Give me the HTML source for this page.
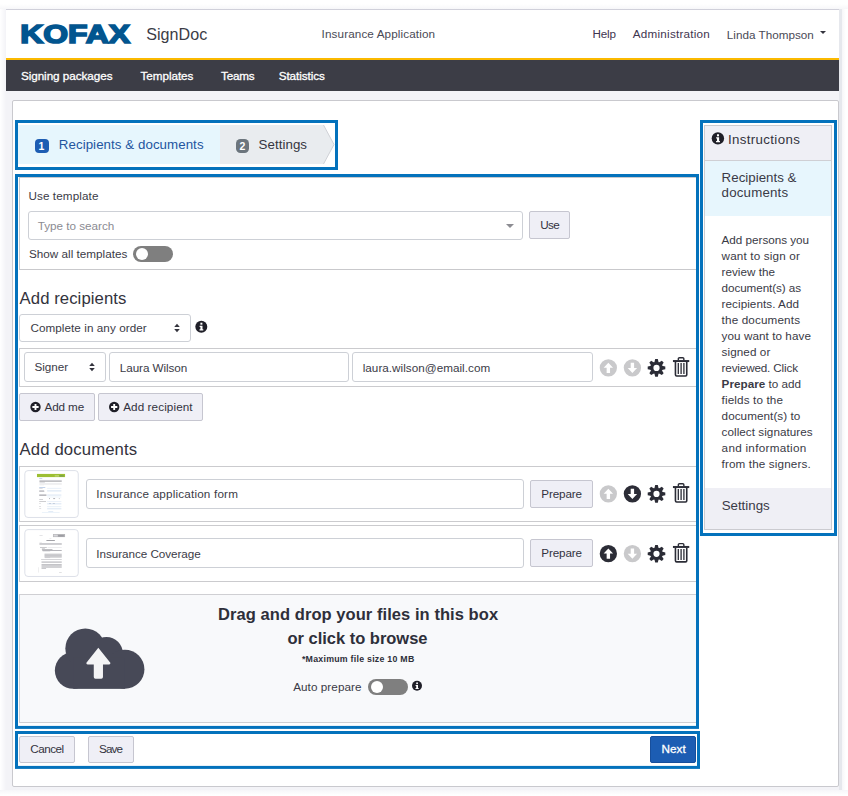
<!DOCTYPE html>
<html lang="en">
<head>
<meta charset="utf-8">
<title>SignDoc - Insurance Application</title>
<style>
*{box-sizing:border-box;margin:0;padding:0}
html,body{width:848px;height:796px;overflow:hidden;background:#fff}
body{position:relative;font-family:"Liberation Sans",sans-serif;font-size:11.7px;color:#3a3a46}
.abs{position:absolute}
.t{position:absolute;white-space:nowrap;line-height:1}
.blue{position:absolute;border:3.3px solid #0b72ba}
.btn{position:absolute;background:#efeff6;border:1px solid #c6c6d0;border-radius:2px}
.inp{position:absolute;background:#fff;border:1px solid #cdd0d6;border-radius:3px}
.box{position:absolute;border:1px solid #cbcbce;background:#fff}
b{font-weight:bold}
</style>
</head>
<body>
<div class="abs" style="left:0;top:5px;width:848px;height:791px;background:linear-gradient(to right,#fff 0,#fdfdfe 1px,#f3f3f7 6px,#f3f3f7 839px,#e6e8ed 839px,#e6e8ed 842px,#f6f6f8 842px,#fff 846px)"></div>
<div class="abs" style="left:0;top:0;width:848px;height:9px;background:linear-gradient(to bottom,#fff 0,#fff 4px,#f7f7f9 9px)"></div>
<div class="abs" style="left:0;top:790px;width:848px;height:6px;background:linear-gradient(to bottom,#f6f6f9 0,#fff 5px)"></div>
<div class="abs" style="left:6px;top:9px;width:833px;height:1px;background:#d0d0da"></div>
<div class="abs" style="left:6px;top:10px;width:833px;height:48px;background:#fff"></div>
<div class="abs" style="left:6px;top:58px;width:833px;height:2px;background:#fbb900"></div>
<div class="abs" style="left:6px;top:60px;width:833px;height:30.5px;background:#3c3d46"></div>
<div class="abs" style="left:12px;top:100px;width:827px;height:687px;background:#fff;border:1px solid #c9c9ce;border-radius:2px"></div>
<svg class="abs" style="left:19px;top:20px" width="116" height="28" viewBox="0 0 116 28"><text x="1.2" y="23.1" font-family="Liberation Sans, sans-serif" font-weight="bold" font-size="26.2" fill="#02558f" stroke="#02558f" stroke-width="1.7" stroke-linejoin="miter" textLength="109.8" lengthAdjust="spacingAndGlyphs">KOFAX</text></svg>
<span class="t" id="t1" style="left:146.2px;top:25.67px;font-size:16.1px;color:#3c3c46;letter-spacing:0.026px;">SignDoc</span>
<span class="t" id="t2" style="left:321.6px;top:28.40px;font-size:11.7px;color:#4a4a56;letter-spacing:0.115px;">Insurance Application</span>
<span class="t" id="t3" style="left:592.4px;top:27.70px;font-size:11.7px;color:#3f3550;letter-spacing:-0.149px;">Help</span>
<span class="t" id="t4" style="left:632.8px;top:27.70px;font-size:11.7px;color:#3f3550;letter-spacing:0.226px;">Administration</span>
<span class="t" id="t5" style="left:726.8px;top:29.00px;font-size:11.7px;color:#4a4a56;letter-spacing:0.011px;">Linda Thompson</span>
<div class="abs" style="left:820.2px;top:31px;width:0;height:0;border-left:3px solid transparent;border-right:3px solid transparent;border-top:3.5px solid #33333d"></div>
<span class="t" id="t6" style="left:20.9px;top:70.00px;font-size:11.7px;color:#ffffff;letter-spacing:-0.045px;-webkit-text-stroke:0.3px #fff;">Signing packages</span>
<span class="t" id="t7" style="left:140.5px;top:70.00px;font-size:11.7px;color:#ffffff;letter-spacing:-0.048px;-webkit-text-stroke:0.3px #fff;">Templates</span>
<span class="t" id="t8" style="left:221.1px;top:70.00px;font-size:11.7px;color:#ffffff;letter-spacing:-0.209px;-webkit-text-stroke:0.3px #fff;">Teams</span>
<span class="t" id="t9" style="left:278.7px;top:70.00px;font-size:11.7px;color:#ffffff;letter-spacing:-0.063px;-webkit-text-stroke:0.3px #fff;">Statistics</span>
<div class="abs" style="left:18px;top:125px;width:202px;height:39px;background:#e6f6fd"></div>
<svg class="abs" style="left:220px;top:125px" width="116" height="39" viewBox="0 0 116 39"><path d="M0 0H103.5L114 19.5L103.5 39H0Z" fill="#e9ecef"/><path d="M103.5 0L114 19.5L103.5 39" fill="none" stroke="#cfd1d6" stroke-width="1"/></svg>
<div class="abs" style="left:35px;top:139px;width:14px;height:14px;border-radius:4px;background:#1d5db3"></div>
<span class="t" id="t10" style="left:38.6px;top:141.31px;font-size:10.5px;color:#fff;font-weight:bold;">1</span>
<span class="t" id="t11" style="left:58.8px;top:138.04px;font-size:13.3px;color:#23559f;letter-spacing:0.064px;">Recipients &amp; documents</span>
<div class="abs" style="left:235.9px;top:139px;width:13.2px;height:14px;border-radius:4.500px;background:#6c757d"></div>
<span class="t" id="t12" style="left:239.6px;top:141.31px;font-size:10.5px;color:#fff;font-weight:bold;">2</span>
<span class="t" id="t13" style="left:258.5px;top:138.04px;font-size:13.3px;color:#35353f;letter-spacing:0.065px;">Settings</span>
<div class="box" style="left:19px;top:177px;width:677.5px;height:92.5px;border-color:#c9c9cc"></div>
<span class="t" id="t14" style="left:28.4px;top:190.30px;font-size:11.7px;color:#3b3b47;letter-spacing:0.104px;">Use template</span>
<div class="inp" style="left:28px;top:211px;width:495px;height:29px"></div>
<span class="t" id="t15" style="left:37.8px;top:220.10px;font-size:11.7px;color:#8b8b93;letter-spacing:-0.013px;">Type to search</span>
<div class="abs" style="left:506px;top:224px;width:0;height:0;border-left:4px solid transparent;border-right:4px solid transparent;border-top:4px solid #8c8c92"></div>
<div class="btn" style="left:529px;top:211px;width:41px;height:28px"></div>
<span class="t" id="t16" style="left:540.3px;top:219.40px;font-size:11.7px;color:#33333f;letter-spacing:-0.648px;">Use</span>
<span class="t" id="t17" style="left:28.9px;top:248.30px;font-size:11.7px;color:#3b3b47;letter-spacing:0.023px;">Show all templates</span>
<div class="abs" style="left:133px;top:246px;width:40px;height:16px;border-radius:8px;background:#7f7f7f"></div>
<div class="abs" style="left:135.5px;top:248px;width:12px;height:12px;border-radius:6px;background:#fff"></div>
<span class="t" id="t18" style="left:19.6px;top:291.06px;font-size:16.7px;color:#33333d;letter-spacing:0.073px;">Add recipients</span>
<div class="inp" style="left:19px;top:314px;width:172px;height:27.5px"></div>
<span class="t" id="t19" style="left:30.4px;top:321.60px;font-size:11.7px;color:#3b3b47;letter-spacing:0.065px;">Complete in any order</span>
<svg class="abs" style="left:174px;top:323px" width="7" height="11" viewBox="0 0 7 11"><g transform="translate(0.00 0.00)"><path d="M0.200 4L3 0.800L5.800 4Z M0.200 6L3 9.200L5.800 6Z" fill="#33333d"/></g></svg>
<svg class="abs" style="left:195px;top:320px" width="14" height="14" viewBox="0 0 14 14"><g transform="translate(0.30 0.70)"><circle cx="6" cy="6" r="6" fill="#1f1f28"/><rect x="5.100" y="2" width="2" height="2" fill="#fff"/><path d="M4.300 5h2.900v3.600h0.800v1.200H4.200V8.600h0.900V6.200H4.300Z" fill="#fff"/></g></svg>
<div class="box" style="left:19px;top:348px;width:677.5px;height:39px"></div>
<div class="inp" style="left:24px;top:352px;width:81.5px;height:29.5px"></div>
<span class="t" id="t20" style="left:34.6px;top:361.30px;font-size:11.7px;color:#3b3b47;letter-spacing:-0.059px;">Signer</span>
<svg class="abs" style="left:89px;top:362px" width="7" height="11" viewBox="0 0 7 11"><g transform="translate(0.00 0.00)"><path d="M0.200 4L3 0.800L5.800 4Z M0.200 6L3 9.200L5.800 6Z" fill="#33333d"/></g></svg>
<div class="inp" style="left:109px;top:352px;width:239.5px;height:29.5px"></div>
<span class="t" id="t21" style="left:119.8px;top:361.70px;font-size:11.7px;color:#3b3b47;letter-spacing:-0.065px;">Laura Wilson</span>
<div class="inp" style="left:352px;top:352px;width:241px;height:29.5px"></div>
<span class="t" id="t22" style="left:362.7px;top:361.70px;font-size:11.7px;color:#3b3b47;letter-spacing:0.031px;">laura.wilson@email.com</span>
<svg class="abs" style="left:599px;top:358px" width="20" height="20" viewBox="0 0 20 20"><g transform="translate(0.35 0.80)"><circle cx="9" cy="9" r="8.650" fill="#c9c9cb"/><path d="M9 3.900L13.700 8.900H10.700V14.100H7.300V8.900H4.300Z" fill="#fff"/></g></svg>
<svg class="abs" style="left:623px;top:358px" width="20" height="20" viewBox="0 0 20 20"><g transform="translate(0.40 0.80)"><circle cx="9" cy="9" r="8.650" fill="#c9c9cb"/><path transform="rotate(180 9 9)" d="M9 3.900L13.700 8.900H10.700V14.100H7.300V8.900H4.300Z" fill="#fff"/></g></svg>
<svg class="abs" style="left:647px;top:358px" width="20" height="20" viewBox="0 0 20 20"><g transform="translate(0.50 0.90)"><g fill="#2b2c36"><path d="M6.800 3.800L7.700 0.200H10.300L11.200 3.800Z" transform="rotate(0 9 9)"/><path d="M6.800 3.800L7.700 0.200H10.300L11.200 3.800Z" transform="rotate(45 9 9)"/><path d="M6.800 3.800L7.700 0.200H10.300L11.200 3.800Z" transform="rotate(90 9 9)"/><path d="M6.800 3.800L7.700 0.200H10.300L11.200 3.800Z" transform="rotate(135 9 9)"/><path d="M6.800 3.800L7.700 0.200H10.300L11.200 3.800Z" transform="rotate(180 9 9)"/><path d="M6.800 3.800L7.700 0.200H10.300L11.200 3.800Z" transform="rotate(225 9 9)"/><path d="M6.800 3.800L7.700 0.200H10.300L11.200 3.800Z" transform="rotate(270 9 9)"/><path d="M6.800 3.800L7.700 0.200H10.300L11.200 3.800Z" transform="rotate(315 9 9)"/></g><circle cx="9" cy="9" r="4.650" fill="none" stroke="#2b2c36" stroke-width="3.100"/></g></svg>
<svg class="abs" style="left:672px;top:357px" width="19" height="21" viewBox="0 0 19 21"><g transform="translate(0.95 0.05)"><g fill="none" stroke="#2b2c36"><path d="M5.400 3.200V1.800Q5.400 0.700 6.500 0.700H9.800Q10.900 0.700 10.900 1.800V3.200" stroke-width="1.400"/><path d="M0 4H16.300" stroke-width="2"/><path d="M2.500 5V17.700Q2.500 18.900 3.700 18.900H12.600Q13.800 18.900 13.800 17.700V5" stroke-width="1.600"/><path d="M5.350 6V17M8.150 6V17M10.950 6V17" stroke-width="1.300"/></g></g></svg>
<div class="btn" style="left:19px;top:393px;width:76px;height:28px"></div>
<svg class="abs" style="left:30px;top:401px" width="12" height="13" viewBox="0 0 12 13"><g transform="translate(0.30 0.80) scale(1.0400)"><circle cx="5" cy="5" r="5" fill="#1f1f28"/><path d="M4.100 2h1.800v2.100H8v1.800H5.900V8H4.100V5.900H2V4.100h2.100Z" fill="#fff"/></g></svg>
<span class="t" id="t23" style="left:44.5px;top:401.10px;font-size:11.7px;color:#33333f;letter-spacing:-0.116px;">Add me</span>
<div class="btn" style="left:98px;top:393px;width:105px;height:28px"></div>
<svg class="abs" style="left:109px;top:401px" width="12" height="13" viewBox="0 0 12 13"><g transform="translate(0.00 0.80) scale(1.0400)"><circle cx="5" cy="5" r="5" fill="#1f1f28"/><path d="M4.100 2h1.800v2.100H8v1.800H5.900V8H4.100V5.900H2V4.100h2.100Z" fill="#fff"/></g></svg>
<span class="t" id="t24" style="left:123.2px;top:401.10px;font-size:11.7px;color:#33333f;letter-spacing:0.097px;">Add recipient</span>
<span class="t" id="t25" style="left:19.6px;top:441.86px;font-size:16.7px;color:#33333d;letter-spacing:0.128px;">Add documents</span>
<div class="box" style="left:19px;top:466px;width:677.5px;height:55.5px"></div>
<svg class="abs" style="left:20px;top:466px" width="64" height="56" viewBox="0 0 848 742"><rect x="64" y="61" width="708" height="621" rx="42" fill="#fff" stroke="#d9dde5" stroke-width="12"/><g opacity="0.92"><rect x="225" y="105" width="372" height="42" fill="#95ba22"/><rect x="460" y="122" width="60" height="18" fill="#b9d26a"/><rect x="520" y="122" width="60" height="18" fill="#6f9a3a"/><rect x="255" y="160" width="40" height="8" fill="#9db9df"/><rect x="258" y="185" width="295" height="7" fill="#a6a6ad"/><rect x="258" y="198" width="295" height="8" fill="#85858d"/><rect x="258" y="210" width="72" height="6" fill="#9a9aa2"/><rect x="258" y="228" width="295" height="5" fill="#d2d2d6"/><rect x="258" y="240" width="295" height="5" fill="#d6d6da"/><rect x="258" y="250" width="62" height="4" fill="#dcdcdf"/><rect x="255" y="280" width="80" height="8" fill="#93b1dc"/><rect x="360" y="290" width="188" height="12" fill="#e6eef8"/><rect x="360" y="318" width="188" height="22" fill="#e3ecf7"/><rect x="360" y="375" width="188" height="21" fill="#e6eef8"/><rect x="360" y="405" width="188" height="11" fill="#e9f0f9"/><rect x="360" y="465" width="188" height="10" fill="#e3ecf7"/><rect x="360" y="490" width="188" height="20" fill="#e3ecf7"/><rect x="360" y="533" width="188" height="12" fill="#e6eef8"/><rect x="360" y="556" width="188" height="19" fill="#e3ecf7"/><rect x="255" y="292" width="45" height="6" fill="#b4b4ba"/><rect x="255" y="325" width="65" height="7" fill="#9a9aa2"/><rect x="255" y="334" width="67" height="7" fill="#8e8e96"/><rect x="255" y="378" width="95" height="8" fill="#9a9aa2"/><rect x="255" y="388" width="95" height="8" fill="#8e8e96"/><rect x="255" y="440" width="50" height="7" fill="#a2a2a9"/><rect x="255" y="465" width="90" height="7" fill="#9a9aa2"/><rect x="255" y="492" width="20" height="6" fill="#b0b0b6"/><rect x="255" y="533" width="20" height="7" fill="#b0b0b6"/><rect x="255" y="560" width="25" height="6" fill="#b8b8be"/><rect x="385" y="428" width="12" height="10" fill="#8c8c94"/><rect x="440" y="428" width="25" height="10" fill="#8c8c94"/><rect x="515" y="428" width="10" height="10" fill="#a0a0a8"/><rect x="385" y="492" width="25" height="8" fill="#a9b4c6"/><rect x="435" y="492" width="27" height="8" fill="#a9b4c6"/><rect x="375" y="600" width="65" height="6" fill="#bcd3ee"/><rect x="290" y="612" width="235" height="6" fill="#d3e2f3"/></g></svg>
<div class="inp" style="left:86px;top:479px;width:437.5px;height:29.5px"></div>
<span class="t" id="t26" style="left:96.3px;top:488.10px;font-size:11.7px;color:#3b3b47;letter-spacing:0.181px;">Insurance application form</span>
<div class="btn" style="left:530px;top:480px;width:63px;height:27.5px"></div>
<span class="t" id="t27" style="left:541.3px;top:487.70px;font-size:11.7px;color:#33333f;letter-spacing:-0.132px;">Prepare</span>
<svg class="abs" style="left:599px;top:484px" width="20" height="20" viewBox="0 0 20 20"><g transform="translate(0.35 0.80)"><circle cx="9" cy="9" r="8.650" fill="#c9c9cb"/><path d="M9 3.900L13.700 8.900H10.700V14.100H7.300V8.900H4.300Z" fill="#fff"/></g></svg>
<svg class="abs" style="left:623px;top:484px" width="20" height="20" viewBox="0 0 20 20"><g transform="translate(0.40 0.80)"><circle cx="9" cy="9" r="8.650" fill="#2b2c36"/><path transform="rotate(180 9 9)" d="M9 3.900L13.700 8.900H10.700V14.100H7.300V8.900H4.300Z" fill="#fff"/></g></svg>
<svg class="abs" style="left:647px;top:484px" width="20" height="20" viewBox="0 0 20 20"><g transform="translate(0.50 0.90)"><g fill="#2b2c36"><path d="M6.800 3.800L7.700 0.200H10.300L11.200 3.800Z" transform="rotate(0 9 9)"/><path d="M6.800 3.800L7.700 0.200H10.300L11.200 3.800Z" transform="rotate(45 9 9)"/><path d="M6.800 3.800L7.700 0.200H10.300L11.200 3.800Z" transform="rotate(90 9 9)"/><path d="M6.800 3.800L7.700 0.200H10.300L11.200 3.800Z" transform="rotate(135 9 9)"/><path d="M6.800 3.800L7.700 0.200H10.300L11.200 3.800Z" transform="rotate(180 9 9)"/><path d="M6.800 3.800L7.700 0.200H10.300L11.200 3.800Z" transform="rotate(225 9 9)"/><path d="M6.800 3.800L7.700 0.200H10.300L11.200 3.800Z" transform="rotate(270 9 9)"/><path d="M6.800 3.800L7.700 0.200H10.300L11.200 3.800Z" transform="rotate(315 9 9)"/></g><circle cx="9" cy="9" r="4.650" fill="none" stroke="#2b2c36" stroke-width="3.100"/></g></svg>
<svg class="abs" style="left:672px;top:483px" width="19" height="21" viewBox="0 0 19 21"><g transform="translate(0.95 0.05)"><g fill="none" stroke="#2b2c36"><path d="M5.400 3.200V1.800Q5.400 0.700 6.500 0.700H9.800Q10.900 0.700 10.900 1.800V3.200" stroke-width="1.400"/><path d="M0 4H16.300" stroke-width="2"/><path d="M2.500 5V17.700Q2.500 18.900 3.700 18.900H12.600Q13.800 18.900 13.800 17.700V5" stroke-width="1.600"/><path d="M5.350 6V17M8.150 6V17M10.950 6V17" stroke-width="1.300"/></g></g></svg>
<div class="box" style="left:19px;top:525px;width:677.5px;height:56.5px"></div>
<svg class="abs" style="left:20px;top:525px" width="64" height="56" viewBox="0 0 848 742"><rect x="64" y="61" width="708" height="621" rx="42" fill="#fff" stroke="#d9dde5" stroke-width="12"/><g opacity="0.75"><rect x="437" y="120" width="160" height="40" fill="#9a9aa0"/><rect x="445" y="128" width="55" height="24" fill="#c9c9cd"/><rect x="505" y="135" width="75" height="17" fill="#77777e"/><rect x="258" y="135" width="42" height="7" fill="#bdbdc2"/><rect x="390" y="180" width="25" height="6" fill="#c4c4c8"/><rect x="350" y="200" width="112" height="10" fill="#5e5e66"/><rect x="258" y="232" width="32" height="5" fill="#c8c8cc"/><rect x="258" y="240" width="295" height="7" fill="#9c9ca3"/><rect x="258" y="249" width="295" height="7" fill="#8c8c94"/><rect x="258" y="258" width="295" height="6" fill="#a4a4ab"/><rect x="265" y="293" width="90" height="7" fill="#7c7c84"/><rect x="365" y="294" width="188" height="5" fill="#c2c2c7"/><rect x="290" y="305" width="40" height="7" fill="#9c9ca3"/><rect x="290" y="318" width="140" height="8" fill="#74747c"/><rect x="295" y="332" width="258" height="10" fill="#7e7e86"/><rect x="300" y="348" width="100" height="6" fill="#c4c4c8"/><rect x="325" y="380" width="228" height="8" fill="#a8a8ae"/><rect x="325" y="392" width="228" height="10" fill="#808088"/><rect x="325" y="406" width="228" height="10" fill="#808088"/><rect x="325" y="420" width="228" height="10" fill="#94949b"/><rect x="330" y="432" width="70" height="6" fill="#a8a8ae"/><rect x="280" y="455" width="273" height="8" fill="#a2a2a9"/><rect x="285" y="478" width="268" height="6" fill="#b4b4ba"/><rect x="285" y="488" width="268" height="10" fill="#94949b"/><rect x="285" y="520" width="268" height="8" fill="#7e7e86"/><rect x="285" y="532" width="268" height="8" fill="#94949b"/><rect x="285" y="545" width="268" height="8" fill="#9c9ca3"/><rect x="285" y="558" width="268" height="8" fill="#9c9ca3"/><rect x="285" y="572" width="60" height="8" fill="#8c8c94"/><rect x="240" y="560" width="6" height="70" fill="#d0d0d4"/><rect x="518" y="625" width="35" height="7" fill="#b4b4ba"/></g></svg>
<div class="inp" style="left:86px;top:538px;width:437.5px;height:30.3px"></div>
<span class="t" id="t28" style="left:96.3px;top:547.90px;font-size:11.7px;color:#3b3b47;letter-spacing:-0.045px;">Insurance Coverage</span>
<div class="btn" style="left:530px;top:539px;width:63px;height:27.5px"></div>
<span class="t" id="t29" style="left:541.3px;top:546.70px;font-size:11.7px;color:#33333f;letter-spacing:-0.132px;">Prepare</span>
<svg class="abs" style="left:599px;top:544px" width="20" height="20" viewBox="0 0 20 20"><g transform="translate(0.35 0.70)"><circle cx="9" cy="9" r="8.650" fill="#2b2c36"/><path d="M9 3.900L13.700 8.900H10.700V14.100H7.300V8.900H4.300Z" fill="#fff"/></g></svg>
<svg class="abs" style="left:623px;top:544px" width="20" height="20" viewBox="0 0 20 20"><g transform="translate(0.40 0.70)"><circle cx="9" cy="9" r="8.650" fill="#c9c9cb"/><path transform="rotate(180 9 9)" d="M9 3.900L13.700 8.900H10.700V14.100H7.300V8.900H4.300Z" fill="#fff"/></g></svg>
<svg class="abs" style="left:647px;top:544px" width="20" height="20" viewBox="0 0 20 20"><g transform="translate(0.50 0.80)"><g fill="#2b2c36"><path d="M6.800 3.800L7.700 0.200H10.300L11.200 3.800Z" transform="rotate(0 9 9)"/><path d="M6.800 3.800L7.700 0.200H10.300L11.200 3.800Z" transform="rotate(45 9 9)"/><path d="M6.800 3.800L7.700 0.200H10.300L11.200 3.800Z" transform="rotate(90 9 9)"/><path d="M6.800 3.800L7.700 0.200H10.300L11.200 3.800Z" transform="rotate(135 9 9)"/><path d="M6.800 3.800L7.700 0.200H10.300L11.200 3.800Z" transform="rotate(180 9 9)"/><path d="M6.800 3.800L7.700 0.200H10.300L11.200 3.800Z" transform="rotate(225 9 9)"/><path d="M6.800 3.800L7.700 0.200H10.300L11.200 3.800Z" transform="rotate(270 9 9)"/><path d="M6.800 3.800L7.700 0.200H10.300L11.200 3.800Z" transform="rotate(315 9 9)"/></g><circle cx="9" cy="9" r="4.650" fill="none" stroke="#2b2c36" stroke-width="3.100"/></g></svg>
<svg class="abs" style="left:672px;top:542px" width="19" height="22" viewBox="0 0 19 22"><g transform="translate(0.95 0.95)"><g fill="none" stroke="#2b2c36"><path d="M5.400 3.200V1.800Q5.400 0.700 6.500 0.700H9.800Q10.900 0.700 10.900 1.800V3.200" stroke-width="1.400"/><path d="M0 4H16.300" stroke-width="2"/><path d="M2.500 5V17.700Q2.500 18.900 3.700 18.900H12.600Q13.800 18.900 13.800 17.700V5" stroke-width="1.600"/><path d="M5.350 6V17M8.150 6V17M10.950 6V17" stroke-width="1.300"/></g></g></svg>
<div class="box" style="left:19px;top:594px;width:677.5px;height:128.5px;background:#f8f9fb;border-color:#cfcfd3"></div>
<svg class="abs" style="left:40px;top:615px" width="120" height="90" viewBox="0 0 848 636"><g fill="#474957"><circle cx="235" cy="392" r="130"/><circle cx="320" cy="236" r="141"/><circle cx="470" cy="271" r="115"/><circle cx="600" cy="383" r="138"/><rect x="235" y="300" width="365" height="222"/></g><path d="M412 232L497 338Q500 350 488 350H445V438Q445 450 433 450H392Q380 450 380 438V350H337Q325 350 328 338Z" fill="#f4f4f5"/></svg>
<span class="t" id="t30" style="left:218.1px;top:606.23px;font-size:16.5px;color:#2e2f3a;font-weight:bold;letter-spacing:0.063px;">Drag and drop your files in this box</span>
<span class="t" id="t31" style="left:287.5px;top:630.33px;font-size:16.5px;color:#2e2f3a;font-weight:bold;letter-spacing:-0.017px;">or click to browse</span>
<span class="t" id="t32" style="left:301.9px;top:654.85px;font-size:8.8px;color:#2e2f3a;font-weight:bold;letter-spacing:0.253px;">*Maximum file size 10 MB</span>
<span class="t" id="t33" style="left:293.2px;top:681.10px;font-size:11.7px;color:#3b3b47;letter-spacing:0.066px;">Auto prepare</span>
<div class="abs" style="left:368px;top:679px;width:40px;height:16px;border-radius:8px;background:#7f7f7f"></div>
<div class="abs" style="left:370.5px;top:681px;width:12px;height:12px;border-radius:6px;background:#fff"></div>
<svg class="abs" style="left:412px;top:680px" width="11" height="12" viewBox="0 0 11 12"><g transform="translate(0.00 0.80) scale(0.8333)"><circle cx="6" cy="6" r="6" fill="#1f1f28"/><rect x="5.100" y="2" width="2" height="2" fill="#fff"/><path d="M4.300 5h2.900v3.600h0.800v1.200H4.200V8.600h0.900V6.200H4.300Z" fill="#fff"/></g></svg>
<div class="btn" style="left:19px;top:736px;width:56px;height:27px"></div>
<span class="t" id="t34" style="left:30.2px;top:742.80px;font-size:11.7px;color:#33333f;letter-spacing:-0.478px;">Cancel</span>
<div class="btn" style="left:88px;top:736px;width:46px;height:27px"></div>
<span class="t" id="t35" style="left:99.0px;top:742.80px;font-size:11.7px;color:#33333f;letter-spacing:-0.914px;">Save</span>
<div class="abs" style="left:650px;top:736px;width:46px;height:27px;background:#1c5db3;border:1px solid #174f9c;border-radius:2px"></div>
<span class="t" id="t36" style="left:661.4px;top:742.80px;font-size:11.7px;color:#fff;letter-spacing:0.084px;-webkit-text-stroke:0.3px #fff;">Next</span>
<div class="abs" style="left:704px;top:125px;width:128px;height:405px;border:1px solid #cbcbd0;background:#fff"></div>
<div class="abs" style="left:705px;top:126px;width:126px;height:35px;background:#efeff5;border-bottom:1px solid #cfcfd4"></div>
<svg class="abs" style="left:711px;top:132px" width="15" height="14" viewBox="0 0 15 14"><g transform="translate(0.70 0.20) scale(1.0333)"><circle cx="6" cy="6" r="6" fill="#1f1f28"/><rect x="5.100" y="2" width="2" height="2" fill="#fff"/><path d="M4.300 5h2.900v3.600h0.800v1.200H4.200V8.600h0.900V6.200H4.300Z" fill="#fff"/></g></svg>
<span class="t" id="t37" style="left:728.0px;top:132.74px;font-size:13.3px;color:#33333d;letter-spacing:0.345px;">Instructions</span>
<div class="abs" style="left:705px;top:161px;width:126px;height:55px;background:#e7f6fd"></div>
<span class="t" id="t38" style="left:721.6px;top:171.34px;font-size:13.3px;color:#3a3a46;letter-spacing:0.023px;">Recipients &amp;</span>
<span class="t" id="t39" style="left:721.6px;top:186.34px;font-size:13.3px;color:#3a3a46;letter-spacing:0.182px;">documents</span>
<span class="t" id="t40" style="left:721.6px;top:234.30px;font-size:11.7px;color:#3a3a46;letter-spacing:-0.016px;">Add persons you</span>
<span class="t" id="t41" style="left:721.6px;top:250.30px;font-size:11.7px;color:#3a3a46;letter-spacing:0.156px;">want to sign or</span>
<span class="t" id="t42" style="left:721.6px;top:266.30px;font-size:11.7px;color:#3a3a46;letter-spacing:0.002px;">review the</span>
<span class="t" id="t43" style="left:721.6px;top:282.30px;font-size:11.7px;color:#3a3a46;letter-spacing:-0.081px;">document(s) as</span>
<span class="t" id="t44" style="left:721.6px;top:298.30px;font-size:11.7px;color:#3a3a46;letter-spacing:0.052px;">recipients. Add</span>
<span class="t" id="t45" style="left:721.6px;top:314.30px;font-size:11.7px;color:#3a3a46;letter-spacing:0.144px;">the documents</span>
<span class="t" id="t46" style="left:721.6px;top:330.30px;font-size:11.7px;color:#3a3a46;letter-spacing:0.062px;">you want to have</span>
<span class="t" id="t47" style="left:721.6px;top:346.30px;font-size:11.7px;color:#3a3a46;letter-spacing:0.076px;">signed or</span>
<span class="t" id="t48" style="left:721.6px;top:362.30px;font-size:11.7px;color:#3a3a46;letter-spacing:-0.157px;">reviewed. Click</span>
<span class="t" id="t49" style="left:721.6px;top:378.30px;font-size:11.7px;color:#3a3a46;letter-spacing:0.016px;"><b>Prepare</b> to add</span>
<span class="t" id="t50" style="left:721.6px;top:394.30px;font-size:11.7px;color:#3a3a46;letter-spacing:0.127px;">fields to the</span>
<span class="t" id="t51" style="left:721.6px;top:410.30px;font-size:11.7px;color:#3a3a46;letter-spacing:0.057px;">document(s) to</span>
<span class="t" id="t52" style="left:721.6px;top:426.30px;font-size:11.7px;color:#3a3a46;letter-spacing:0.046px;">collect signatures</span>
<span class="t" id="t53" style="left:721.6px;top:442.30px;font-size:11.7px;color:#3a3a46;letter-spacing:0.287px;">and information</span>
<span class="t" id="t54" style="left:721.6px;top:458.30px;font-size:11.7px;color:#3a3a46;letter-spacing:0.128px;">from the signers.</span>
<div class="abs" style="left:705px;top:488px;width:126px;height:41px;background:#efeff5"></div>
<span class="t" id="t55" style="left:721.7px;top:498.64px;font-size:13.3px;color:#3a3a46;letter-spacing:-0.007px;">Settings</span>
<svg class="abs" style="left:0;top:0;pointer-events:none" width="848" height="796" viewBox="0 0 848 796"><g fill="none" stroke="#0472bc" stroke-width="3"><rect x="16.50" y="121.50" width="320.00" height="47.00"/><rect x="16.50" y="175.50" width="681.00" height="551.90"/><rect x="16.50" y="732.50" width="682.00" height="34.90"/><rect x="701.50" y="121.50" width="134.00" height="413.00"/></g></svg>
</body>
</html>
